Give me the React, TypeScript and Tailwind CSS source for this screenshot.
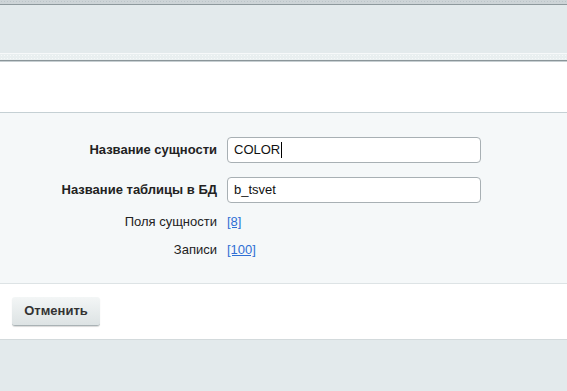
import React from "react";

const Row = ({
  label,
  bold,
  className,
  children,
}: {
  label: string;
  bold?: boolean;
  className?: string;
  children: React.ReactNode;
}) => (
  <div className={`flex items-center ${className ?? ""}`}>
    <div
      className={`w-[217px] shrink-0 text-right text-[13px] text-[#222] ${
        bold ? "font-bold" : ""
      }`}
    >
      {label}
    </div>
    <div className="ml-[10px] flex items-center">{children}</div>
  </div>
);

const App = () => {
  return (
    <div
      className="w-[567px] h-[391px] overflow-hidden bg-[#e3eaec]"
      style={{ fontFamily: '"Liberation Sans", Arial, sans-serif' }}
    >
      {/* top strip */}
      <div className="h-[4px] bg-[#cdd4d7] bg-[radial-gradient(#bcc5c9_0.6px,transparent_0.8px)] bg-[length:3px_3px]" />
      <div className="h-[1px] bg-[#8e999d]" />
      <div className="h-[48px] bg-[#e3eaec]" />
      <div className="h-[1px] bg-[#f7f9fa]" />
      <div className="h-[6px] bg-[#e9eff0] bg-[radial-gradient(#f6f9f9_0.6px,transparent_0.8px)] bg-[length:3px_3px]" />
      <div className="h-[1px] bg-[#8a9599]" />
      <div className="h-[1px] bg-[#c7cfd2]" />

      {/* white header panel */}
      <div className="h-[50px] bg-white" />
      <div className="h-[1px] bg-[#c5d0d4]" />

      {/* form */}
      <div className="h-[170px] bg-[#f5f8f9] pt-[24px]">
        <Row label="Название сущности" bold className="h-[26px]">
          <div className="w-[254px] h-[26px] rounded-[4px] border border-[#a8b0b4] bg-white px-[6px] flex items-center text-[13px] text-[#111]">
            COLOR
            <span className="inline-block w-[1px] h-[16px] bg-black ml-[1px]" />
          </div>
        </Row>
        <Row label="Название таблицы в БД" bold className="h-[26px] mt-[14px]">
          <div className="w-[254px] h-[26px] rounded-[4px] border border-[#a8b0b4] bg-white px-[6px] flex items-center text-[13px] text-[#111]">
            b_tsvet
          </div>
        </Row>
        <Row label="Поля сущности" className="h-[28px] mt-[5px]">
          <a href="#" className="text-[13px] text-[#2f6fd4] underline">
            [8]
          </a>
        </Row>
        <Row label="Записи" className="h-[28px]">
          <a href="#" className="text-[13px] text-[#2f6fd4] underline">
            [100]
          </a>
        </Row>
      </div>
      <div className="h-[1px] bg-[#dde3e5]" />

      {/* footer buttons */}
      <div className="h-[55px] bg-white pl-[12px] pt-[13px]">
        <button className="w-[88px] h-[29px] rounded-[3px] bg-gradient-to-b from-[#f3f6f6] to-[#dde3e4] border-b border-[#a9b2b5] shadow-[0_1px_1px_rgba(0,0,0,0.15)] text-[13px] font-bold text-[#333]">
          Отменить
        </button>
      </div>
      <div className="h-[1px] bg-[#d3dadc]" />
      <div className="h-[60px] bg-[#e3eaec]" />
    </div>
  );
};

export default App;
